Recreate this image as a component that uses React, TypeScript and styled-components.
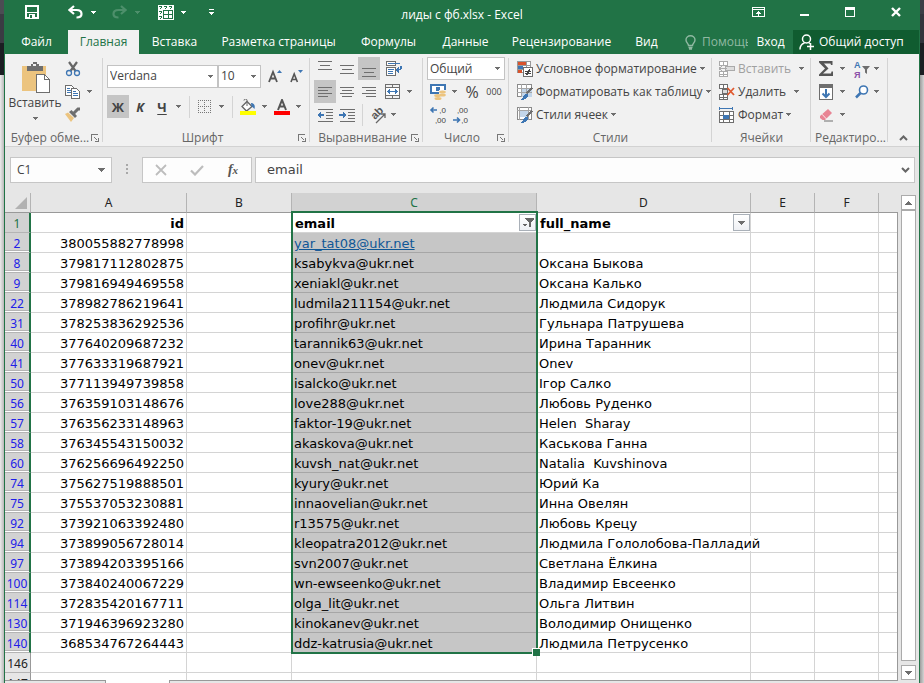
import React from "react";
import styled, { createGlobalStyle, css } from "styled-components";

const GREEN = "#217346";
const INK = "#444";
const BLUE = "#3e76b3";
const GREY = "#6e6e6e";

const GlobalStyle = createGlobalStyle`
  * { box-sizing: border-box; }
  body { margin: 0; overflow: hidden; }
  button, input, select { font: inherit; color: inherit; margin: 0; }
  svg { flex: none; }
`;

/* ---------- window ---------- */

const Desktop = styled.div`
  display: flex;
  height: 100vh;
  font: 12px/16px "Open Sans", "Noto Sans", sans-serif;
  color: ${INK};
  background: #e6e6e6;
`;

const Backdrop = styled.div<{ $side: "left" | "right" }>`
  flex: none;
  width: 4px;
  background: ${(p) =>
    p.$side === "left"
      ? "linear-gradient(#4b4c53 0 14px, #3a3b43 14px 43px, #1b1e22 43px 75px, transparent 75px), linear-gradient(90deg, #ececec, #b9b9b9)"
      : "linear-gradient(#3c3d45 0 14px, #33343c 14px 43px, #1b1e22 43px 75px, transparent 75px), linear-gradient(90deg, #9d9d9d, #d4d4d4)"};
`;

const Window = styled.div`
  flex: 1;
  min-width: 0;
  display: flex;
  flex-direction: column;
  border: solid ${GREEN};
  border-width: 0 1px;
  background: #e6e6e6;
`;

const IconButton = styled.button<{ $w?: number; $on?: boolean; $h?: number }>`
  display: inline-flex;
  align-items: center;
  justify-content: center;
  flex: none;
  width: ${(p) => p.$w ?? 22}px;
  height: ${(p) => p.$h ?? 23}px;
  padding: 0;
  border: 0;
  background: ${(p) => (p.$on ? "#c5c5c5" : "transparent")};
`;

const TitleBar = styled.header`
  display: grid;
  grid-template-columns: 1fr auto 1fr;
  align-items: center;
  height: 30px;
  background: ${GREEN};
  color: #fff;
`;

const QuickAccess = styled.div`
  display: flex;
  padding: 0 0 6px 14px;
`;

const Title = styled.h1`
  margin: 0;
  font: inherit;
`;

const WindowButtons = styled.div`
  display: flex;
  justify-content: flex-end;
  padding: 0 0 6px;
`;

const TabBar = styled.nav`
  display: flex;
  height: 24px;
  background: ${GREEN};
  color: #fff;
`;

const Tab = styled.button<{ $w: number; $active?: boolean }>`
  flex: none;
  width: ${(p) => p.$w}px;
  padding: 0;
  border: 0;
  white-space: nowrap;
  background: ${(p) => (p.$active ? "#f1f1f1" : "transparent")};
  color: ${(p) => (p.$active ? GREEN : "#fff")};
`;

const HelpBox = styled.button`
  flex: 1;
  min-width: 0;
  display: flex;
  align-items: center;
  gap: 6px;
  overflow: hidden;
  padding: 0 0 0 14px;
  border: 0;
  background: none;
  color: #90b9a2;
`;

const ShareButton = styled.button`
  flex: none;
  display: flex;
  align-items: center;
  gap: 4px;
  width: 126px;
  padding: 0 0 0 6px;
  border: 0;
  background: #105c30;
  color: #fff;
  white-space: nowrap;
`;

/* ---------- ribbon ---------- */

const Ribbon = styled.section`
  display: flex;
  height: 93px;
  background: #f1f1f1;
  border-bottom: 1px solid #d2d2d2;
`;

const GroupBox = styled.div<{ $w: number }>`
  flex: none;
  display: flex;
  flex-direction: column;
  width: ${(p) => p.$w}px;
  padding-top: 3px;
  position: relative;
  &::after {
    content: "";
    position: absolute;
    right: 0;
    top: 4px;
    bottom: 4px;
    width: 1px;
    background: #d4d4d4;
  }
`;

const GroupBody = styled.div<{ $pad?: number }>`
  flex: 1;
  padding-left: ${(p) => p.$pad ?? 4}px;
`;

const GroupLabel = styled.div`
  display: flex;
  align-items: center;
  height: 17px;
  padding: 0 4px;
  color: #666;
  white-space: nowrap;
  span { flex: 1; text-align: center; }
`;

const Row = styled.div<{ $h?: number }>`
  display: flex;
  align-items: center;
  height: ${(p) => p.$h ?? 23}px;
`;

const Spacer = styled.i<{ $w: number }>`
  flex: none;
  width: ${(p) => p.$w}px;
`;

const Divider = styled.i`
  flex: none;
  width: 1px;
  height: 22px;
  background: #d4d4d4;
`;

const ClipboardBody = styled.div`
  display: flex;
  flex: 1;
`;

const PasteButton = styled.button`
  display: flex;
  flex-direction: column;
  align-items: center;
  width: 60px;
  padding: 5px 0 0;
  border: 0;
  background: none;
  svg + span { margin: 2px 0 6px; }
`;

const SmallColumn = styled.div`
  display: flex;
  flex-direction: column;
`;

const TextButton = styled.button<{ $muted?: boolean }>`
  display: flex;
  align-items: center;
  gap: 3px;
  height: 23px;
  padding: 0;
  border: 0;
  background: none;
  white-space: nowrap;
  color: ${(p) => (p.$muted ? "#a0a0a0" : INK)};
`;

const Combo = styled.label<{ $w: number }>`
  display: grid;
  flex: none;
  align-items: center;
  width: ${(p) => p.$w}px;
  height: 23px;
  border: 1px solid #c3c3c3;
  background: #fff;
  & > * { grid-area: 1 / 1; }
  & > svg { justify-self: end; margin-right: 4px; pointer-events: none; }
  select {
    appearance: none;
    width: 100%;
    height: 100%;
    padding: 0 0 0 2px;
    border: 0;
    background: transparent;
  }
`;

const Letter = styled.span<{ $kind: "bold" | "italic" | "under" }>`
  font-weight: 700;
  font-size: 13px;
  ${(p) => p.$kind === "italic" && css`font-style: italic;`}
  ${(p) => p.$kind === "under" && css`text-decoration: underline; text-underline-offset: 2px;`}
`;

const Glyph = styled.span<{ $size: number }>`
  font-size: ${(p) => p.$size}px;
`;

const CollapseSlot = styled.div`
  flex: 1;
  display: flex;
  align-items: flex-end;
  justify-content: center;
`;

/* ---------- formula bar ---------- */

const FormulaBar = styled.div`
  display: flex;
  align-items: center;
  height: 46px;
  padding: 0 4px 0 5px;
`;

const NameBox = styled.label`
  display: flex;
  align-items: center;
  flex: none;
  width: 102px;
  height: 26px;
  padding: 0 6px;
  border: 1px solid #c6c6c6;
  background: #fdfdfd;
  input { flex: 1; min-width: 0; padding: 0; border: 0; background: none; }
`;

const Dots = styled.span`
  width: 30px;
  text-align: center;
`;

const FxBox = styled.div`
  display: flex;
  flex: none;
  align-items: center;
  width: 110px;
  height: 26px;
  margin-right: 3px;
  border: 1px solid #c6c6c6;
  background: #fdfdfd;
`;

const FormulaField = styled.label`
  display: flex;
  flex: 1;
  align-items: center;
  min-width: 0;
  height: 26px;
  padding: 0 4px 0 11px;
  border: 1px solid #c6c6c6;
  background: #fdfdfd;
  font-family: "DejaVu Sans", sans-serif;
  input { flex: 1; min-width: 0; padding: 0; border: 0; background: none; font-size: 13px; }
`;

/* ---------- sheet ---------- */

const SheetArea = styled.main`
  flex: 1;
  min-height: 0;
  display: flex;
`;

const SheetView = styled.div`
  flex: 1;
  min-width: 0;
  overflow: hidden;
  position: relative;
  &::after {
    content: "";
    position: absolute;
    inset: 19px 0 0 auto;
    width: 1px;
    background: #999;
  }
`;

const Table = styled.table`
  width: 100%;
  table-layout: fixed;
  border-collapse: separate;
  border-spacing: 0;
  font: 13px/17px "DejaVu Sans", sans-serif;
  color: #000;
`;

const Col = styled.col<{ $w?: number }>`
  width: ${(p) => (p.$w ? `${p.$w}px` : "auto")};
`;

const ColHead = styled.th<{ $on?: boolean }>`
  height: 20px;
  padding: 0;
  font: 12px/18px "Noto Sans", sans-serif;
  color: ${(p) => (p.$on ? GREEN : "#222")};
  background: ${(p) => (p.$on ? "#d2d2d2" : "#e6e6e6")};
  border-bottom: 1px solid #999;
  border-right: 1px solid #b4b4b4;
  &:last-child { border-right: 0; }
`;

const Corner = styled(ColHead)`
  svg { display: block; margin: 0 3px 0 auto; }
`;

const RowHead = styled.th<{ $state: "top" | "filtered" | "plain" }>`
  height: 20px;
  padding: 2px 0 0;
  font: 12px/17px "Noto Sans", sans-serif;
  border-bottom: 1px solid #b4b4b4;
  ${(p) =>
    p.$state === "plain"
      ? css`color: #222; background: #e6e6e6; border-right: 1px solid #999;`
      : css`
          color: ${p.$state === "top" ? GREEN : "#2020e8"};
          background: #d2d2d2;
          border-right: 2px solid ${GREEN};
        `}
  ${(p) => p.$state === "filtered" && css`box-shadow: inset 0 -1px #fff, inset 0 -2px #b4b4b4;`}
`;

const Cell = styled.td<{ $right?: boolean; $bold?: boolean; $selected?: boolean }>`
  height: 20px;
  padding: 2px 2px 0;
  white-space: pre;
  text-align: ${(p) => (p.$right ? "right" : "left")};
  font-weight: ${(p) => (p.$bold ? 700 : 400)};
  border-right: 1px solid #d4d4d4;
  border-bottom: 1px solid ${(p) => (p.$selected ? "#a6a6a6" : "#d4d4d4")};
  background: ${(p) => (p.$selected ? "#c6c6c6" : "#fff")};
  &:last-child { border-right: 0; }
`;

const NameCell = styled(Cell)`
  overflow: visible;
  span { position: relative; background: #fff; }
`;

const FilterCell = styled(Cell)`
  padding: 0 0 0 3px;
`;

const HeadCell = styled.div`
  display: flex;
  align-items: center;
  justify-content: space-between;
  height: 19px;
  span { padding-top: 2px; }
`;

const FilterButton = styled.button`
  display: flex;
  align-items: center;
  justify-content: center;
  width: 17px;
  height: 17px;
  padding: 0;
  border: 1px solid #a9b0b8;
  background: linear-gradient(#fff, #eef0f4);
`;

const MailLink = styled.a`
  color: #0f5796;
  text-decoration: underline;
`;

const Selection = styled.div`
  position: absolute;
  left: 286px;
  top: 18px;
  width: 247px;
  height: 443px;
  border: 2px solid ${GREEN};
  pointer-events: none;
  &::after {
    content: "";
    position: absolute;
    right: -4px;
    bottom: -4px;
    width: 7px;
    height: 7px;
    border: solid #fff;
    border-width: 1px 0 0 1px;
    background: ${GREEN};
  }
`;

const ScrollBar = styled.div`
  flex: none;
  display: flex;
  flex-direction: column;
  width: 21px;
  padding: 2px 3px 0;
`;

const ScrollButton = styled.button`
  display: flex;
  align-items: center;
  justify-content: center;
  height: 15px;
  padding: 0;
  border: 1px solid #ababab;
  background: #fff;
`;

const Thumb = styled.div`
  flex: 1;
  margin-bottom: 4px;
  border: 1px solid #ababab;
  background: #fff;
`;

const SheetTabs = styled.footer`
  display: flex;
  flex: none;
  height: 3px;
  padding-right: 21px;
`;

const SheetTab = styled.div<{ $w?: number; $active?: boolean }>`
  ${(p) => (p.$w ? css`flex: none; width: ${p.$w}px;` : css`flex: 1;`)}
  ${(p) =>
    p.$active
      ? css`background: #fff; border: solid #999; border-width: 0 1px;`
      : css`border-top: 1px solid #999;`}
`;

/* ---------- drawings ---------- */

type SvgProps = { w: number; h: number; children: React.ReactNode; smooth?: boolean };
const Svg = ({ w, h, children, smooth }: SvgProps) => (
  <svg
    width={w}
    height={h}
    viewBox={`0 0 ${w} ${h}`}
    fill="none"
    shapeRendering={smooth ? "auto" : "crispEdges"}
    aria-hidden="true"
  >
    {children}
  </svg>
);

const Caret = ({ color = GREY }: { color?: string }) => (
  <Svg w={5} h={3}><path d="M0 0h5v1h-1v1h-1v1h-1v-1h-1v-1h-1z" fill={color} /></Svg>
);

const UpCaret = () => (
  <Svg w={7} h={4}><path d="M3 0h1v1h1v1h1v1h1v1H0v-1h1v-1h1v-1h1z" fill={GREY} /></Svg>
);

const BigCaret = () => (
  <Svg w={7} h={4}><path d="M0 0h7v1h-1v1h-1v1h-1v1h-1v-1h-1v-1h-1v-1h-1z" fill={GREY} /></Svg>
);

const Launcher = () => (
  <Svg w={8} h={8}><path d="M.5 7V.5H7M3.5 3.5l3 3M7.5 4v3.5H4" stroke="#777" /></Svg>
);

const SaveIcon = () => (
  <Svg w={14} h={14}>
    <path d="M1 1h12v12H1z" stroke="#fff" strokeWidth="2" />
    <path d="M2 7h10v1H2zM4 9h6v4H4z" fill="#fff" />
    <path d="M5 10h2v3H5z" fill={GREEN} />
  </Svg>
);

const UndoIcon = ({ color }: { color: string }) => (
  <Svg w={15} h={14} smooth>
    <path d="M6 1L1.5 5 6 9M2 5h6.5c3 0 5 1.500 5 4s-2 3.500-5 3.500" stroke={color} strokeWidth="2.200" />
  </Svg>
);

const RedoIcon = ({ color }: { color: string }) => (
  <Svg w={15} h={14} smooth>
    <path d="M9 1l4.500 4L9 9M13 5H6.500c-3 0-5 1.500-5 4s2 3.500 5 3.500" stroke={color} strokeWidth="2.200" />
  </Svg>
);

const GridToolIcon = () => (
  <Svg w={16} h={15}>
    <path d="M0 0h16v15H0z" fill="#fff" />
    <path d="M1 1.500h3M3.500 2v1M2 3.500h1M6 1.500h3M8.500 2v1M7 3.500h1M11 1.500h3M13.500 2v1M12 3.500h1" stroke={GREEN} />
    <path d="M1 6.500h3M3.500 7v1M2 8.500h1M1 11.500h3M3.500 12v1M2 13.500h1" stroke={GREEN} />
    <path d="M5 5.500h10M5.500 5v9M5 9.500h10M10.500 5v9M5 13.500h10M14.500 5v9" stroke={GREEN} />
  </Svg>
);

const CustomizeIcon = () => (
  <Svg w={5} h={6}><path d="M0 0h5v1H0zM0 3h5L2.500 6z" fill="#fff" /></Svg>
);

const RibbonOptionsIcon = () => (
  <Svg w={13} h={10}>
    <path d="M.5.5h12v9H.5zM1 2.500h11" stroke="#fff" />
    <path d="M6 4h1v5H6zM5 5h3v1H5zM4 6h5v1H4z" fill="#fff" />
  </Svg>
);

const MinimizeIcon = () => <Svg w={9} h={10}><path d="M0 7h9v2H0z" fill="#fff" /></Svg>;
const MaximizeIcon = () => (
  <Svg w={10} h={10}><path d="M.5.5h9v9h-9z" stroke="#fff" /><path d="M0 0h10v3H0z" fill="#fff" /></Svg>
);
const CloseIcon = () => (
  <Svg w={10} h={10} smooth><path d="M1 1l8 8M9 1L1 9" stroke="#fff" strokeWidth="2.400" /></Svg>
);

const BulbIcon = () => (
  <Svg w={11} h={15} smooth>
    <path d="M3.500 10.500C3.500 8.500 1 7.500 1 4.900a4.500 4.200 0 019 0c0 2.600-2.500 3.600-2.500 5.600zM3.500 12.500h4M4 14h3" stroke="#90b9a2" strokeWidth="1.400" />
  </Svg>
);

const ShareIcon = () => (
  <Svg w={16} h={16} smooth>
    <circle cx="7.500" cy="5" r="4" stroke="#fff" strokeWidth="1.500" />
    <path d="M1 15.500c0-3 1.500-5.500 4.500-6.500M9.500 8.500l1.500 1M8 12.500h7M11.500 9v7" stroke="#fff" strokeWidth="1.500" />
  </Svg>
);

const PasteIcon = () => (
  <Svg w={29} h={31}>
    <path d="M1 4h24v25H1z" fill="#ecc47f" />
    <path d="M6 4h4V2h2V0h4v2h2v2h4v5H6z" fill={GREY} />
    <path d="M12 2h3v2h-3z" fill="#f1f1f1" />
    <path d="M15.500 12.500h8l5 5v13h-13z" fill="#fff" stroke={GREY} />
    <path d="M23.500 12v5.500H29" stroke={GREY} />
  </Svg>
);

const CutIcon = () => (
  <Svg w={16} h={16} smooth>
    <path d="M4 1l6.500 9M12 1L5.500 10" stroke="#666" strokeWidth="2.200" />
    <circle cx="4" cy="12" r="2.500" stroke={BLUE} strokeWidth="1.300" />
    <circle cx="12" cy="12" r="2.500" stroke={BLUE} strokeWidth="1.300" />
  </Svg>
);

const CopyIcon = () => (
  <Svg w={16} h={14}>
    <path d="M.5.5h6l3 3v7h-9z" fill="#fff" stroke={GREY} />
    <path d="M2 3.500h3M2 5.500h4M2 7.500h4" stroke={BLUE} />
    <path d="M6.500 3.500h5l3 3v7h-8z" fill="#fff" stroke={GREY} />
    <path d="M8 6.500h3M8 8.500h5M8 10.500h5" stroke={BLUE} />
  </Svg>
);

const BrushIcon = () => (
  <Svg w={16} h={15} smooth>
    <path d="M0 7l3-1.500 6 5.500-3 4z" fill="#ecc47f" />
    <path d="M4 5l2.500-2 5.500 6-2 2z" fill={GREY} />
    <path d="M8.500 6.500L13 2h2" stroke={GREY} strokeWidth="3" />
  </Svg>
);

const GrowIcon = ({ up }: { up?: boolean }) => (
  <Svg w={14} h={14} smooth>
    {up ? (
      <>
        <path d="M1 13L5 3l4 10M2.500 9.500h5" stroke="#555" strokeWidth="1.800" />
        <path d="M9 4h5l-2.500-3z" fill={BLUE} />
      </>
    ) : (
      <>
        <path d="M1 13l3.200-8 3.200 8M2.500 10.500h4" stroke="#555" strokeWidth="1.600" />
        <path d="M8 1h5l-2.500 3z" fill={BLUE} />
      </>
    )}
  </Svg>
);

const BordersIcon = () => (
  <Svg w={14} h={14}>
    <path d="M.5 0v13M6.500 0v13M12.500 0v13M0 .5h13M0 6.500h13M0 12.500h13" stroke="#777" strokeDasharray="1 1" />
  </Svg>
);

const FillIcon = () => (
  <Svg w={16} h={16} smooth>
    <path d="M7 2.500l5 5-5.500 4.500L2 7.500z" fill="#fff" stroke="#666" strokeWidth="1.300" />
    <path d="M7 7V1.500a1.500 1.500 0 00-3 0" stroke="#666" />
    <path d="M11 4c3 0 4.500 2.500 3.500 6-1-1-2-2-3-2.500z" fill={BLUE} />
    <path d="M0 12h16v4H0z" fill="#ff0" />
  </Svg>
);

const FontColorIcon = () => (
  <Svg w={16} h={16} smooth>
    <path d="M4 11L8 1l4 10M5.500 7.500h5" stroke="#555" strokeWidth="2" />
    <path d="M0 12h16v4H0z" fill="#f00" />
  </Svg>
);

const LinesIcon = ({ lines, align = "left" }: { lines: number[]; align?: "left" | "center" | "right" }) => (
  <Svg w={14} h={16}>
    {lines.map((y, i) => {
      const w = i % 2 ? 10 : 14;
      const x = align === "left" ? 0 : align === "center" ? (14 - w) / 2 : 14 - w;
      return <rect key={y} x={x} y={y} width={w} height={1} fill={GREY} />;
    })}
  </Svg>
);

const WrapIcon = () => (
  <Svg w={16} h={16}>
    <path d="M.5.5h9v4h-9zM.5 6.500h9v8h-9z" fill="#fff" stroke={GREY} />
    <path d="M2 2.500h12M2 8.500h6M2 10.500h5M2 12.500h5" stroke={BLUE} />
    <path d="M15 5v2q0 2-4 2M13 6.500L10.500 9l2.500 2.500" stroke={BLUE} strokeWidth="1.500" />
  </Svg>
);

const MergeIcon = () => (
  <Svg w={16} h={15}>
    <path d="M.5.5h14v14H.5zM0 3.500h15M0 11.500h15M7.500 0v3M7.500 12v3" stroke={GREY} />
    <path d="M1 4h13v7H1z" fill="#fff" />
    <path d="M3 7h9v1H3z" fill={BLUE} />
    <path d="M5 5v5L2 7.500zM10 5v5l3-2.500z" fill={BLUE} />
  </Svg>
);

const IndentIcon = ({ inward }: { inward?: boolean }) => (
  <Svg w={16} h={14}>
    <path d="M1 1.500h15M9 4.500h7M9 7.500h7M9 10.500h7M1 13.500h15" stroke={GREY} />
    <path d={inward ? "M0 6h4V4l4 3-4 3V8H0z" : "M7 6H4V4L0 7l4 3V8h3z"} fill={BLUE} />
  </Svg>
);

const OrientIcon = () => (
  <Svg w={20} h={20} smooth>
    <text transform="translate(7 15) rotate(-45)" fontSize="11" fontWeight="700" fontFamily="Liberation Sans, sans-serif" fill="#555">ab</text>
    <path d="M8 18l9-9M13 9h4v4" stroke="#666" strokeWidth="1.300" />
  </Svg>
);

const CurrencyIcon = () => (
  <Svg w={16} h={16} smooth>
    <path d="M1 1h14v8H1z" fill="#fff" stroke={BLUE} strokeWidth="2" />
    <path d="M6 3h4v4H6z" fill={BLUE} />
    <path d="M9 6h7v8H9z" fill="#f1f1f1" />
    <ellipse cx="12.500" cy="8" rx="3.300" ry="1.500" fill="#ecc47f" />
    <ellipse cx="12.500" cy="11" rx="3.300" ry="1.500" fill="#ecc47f" />
    <ellipse cx="7.500" cy="11.500" rx="3.300" ry="1.500" fill="#ecc47f" />
    <ellipse cx="8" cy="14.500" rx="3.500" ry="1.500" fill="#ecc47f" />
  </Svg>
);

const DecimalIcon = ({ more }: { more?: boolean }) => (
  <Svg w={18} h={20} smooth>
    <g fontSize="8" fontFamily="Liberation Sans, sans-serif" fill={INK} textAnchor="end">
      <text x="17" y="8">{more ? ",00" : ",0"}</text>
      <text x="17" y="18">{more ? ",0" : ",00"}</text>
    </g>
    <path d={more ? "M2 15h6M6 12.500L8.500 15 6 17.500" : "M2 5h6M4.500 2.500L2 5l2.500 2.500"} stroke={BLUE} strokeWidth="1.600" />
  </Svg>
);

const ConditionalIcon = () => (
  <Svg w={16} h={16}>
    <path d="M.5.5h13v11H.5zM0 4.500h14M0 8.500h14M9.500 0v12" fill="#fff" stroke="#999" />
    <path d="M1 1h8v3H1zM1 9h4v3H1z" fill="#d9532c" />
    <path d="M1 5h5v3H1z" fill={BLUE} />
    <path d="M6.500 6.500h9v9h-9z" fill="#fff" stroke={GREY} />
    <path d="M8 10.500h6M8 12.500h6M12.500 8.500l-3 6" stroke="#444" />
  </Svg>
);

const StyleBrush = () => (
  <>
    <path d="M16 4l-5 6-2-1 5-6z" fill={GREY} />
    <path d="M11 10c1 3-2 6-7 6 2-1 2-5 5-6z" fill={BLUE} />
  </>
);

const TableStyleIcon = ({ single }: { single?: boolean }) => (
  <Svg w={16} h={16}>
    <path d="M.5.500h14v12H.5z" fill="#fff" stroke="#8a8a8a" />
    <path d={single ? "M3 4h8v6H3z" : "M4 4h11v9H4z"} fill="#c3d6ea" />
    <path d={single ? "M2.500 0v13M0 3.500h15M11.500 0v13" : "M4.500 0v13M9.500 0v13M0 4.500h15M0 8.500h15"} stroke="#a5a5a5" />
    <StyleBrush />
  </Svg>
);

const CellsIcon = ({ kind }: { kind: "insert" | "delete" | "format" }) => {
  const line = kind === "insert" ? "#aaa" : GREY;
  return (
    <Svg w={16} h={16}>
      {kind === "format" ? (
        <>
          <path d="M.5 4.500h14v11H.5zM0 8.500h15M0 12.500h15M4.500 4v12M10.500 4v12" fill="#fff" stroke={GREY} />
          <path d="M4 8h6v4H4z" fill={BLUE} />
          <path d="M.5 0v3M13.500 0v3M1 1.500h12" stroke={BLUE} />
        </>
      ) : (
        <>
          <path d="M.5.500h8v4h-8zM4.500 0v4M.5 10.500h8v5h-8zM4.500 11v4M.5 13.500h8" fill="#fff" stroke={line} />
          {kind === "insert" ? (
            <>
              <path d="M6.500 5.500h9v4h-9z" fill="#ddd" stroke={line} />
              <path d="M0 7.500h8M3 5L0 7.500 3 10" stroke={line} />
            </>
          ) : (
            <>
              <path d="M3.500 5.500h5v4h-5z" fill="#ddd" stroke={line} />
              <path d="M8.500 4l6.500 7M15 4l-6.500 7" stroke="#e0592f" strokeWidth="1.800" shapeRendering="auto" />
            </>
          )}
        </>
      )}
    </Svg>
  );
};

const SigmaIcon = () => (
  <Svg w={16} h={15} smooth>
    <path d="M1 0h13.500v4H13l-.5-1.500H6L10.500 7.500 5 12.500h8l.5-2H15V15H1v-1.500L7 7.500 1 1.500z" fill="#555" />
  </Svg>
);

const SortIcon = () => (
  <Svg w={17} h={20} smooth>
    <g fontSize="9" fontWeight="700" fontFamily="Liberation Sans, sans-serif">
      <text x="0" y="9" fill={BLUE}>А</text>
      <text x="0" y="19" fill="#8b4fa8">Я</text>
    </g>
    <path d="M8 7h8l-3 3.500V15l-2-1.500v-3z" fill={GREY} />
  </Svg>
);

const FillDownIcon = () => (
  <Svg w={14} h={16}>
    <path d="M.5.5h13v15H.5z" fill="#fff" stroke={GREY} />
    <path d="M0 0h14v4H0z" fill={GREY} />
    <path d="M7 5v8M3.500 9.500L7 13l3.500-3.500" stroke={BLUE} strokeWidth="2" shapeRendering="auto" />
  </Svg>
);

const FindIcon = () => (
  <Svg w={14} h={14} smooth>
    <circle cx="8.500" cy="5" r="4" fill="#fff" stroke={BLUE} strokeWidth="1.600" />
    <path d="M5.500 8L1 12.500" stroke={BLUE} strokeWidth="2.500" />
  </Svg>
);

const EraserIcon = () => (
  <Svg w={14} h={14} smooth>
    <path d="M1 8l8-7 4 4-7 7H3.500L1 10z" fill="#e88494" />
    <path d="M3 6.200l4.500 4.800" stroke="#fff" strokeWidth=".8" />
    <path d="M5 13h9" stroke={GREY} />
  </Svg>
);

const ChevronIcon = ({ down }: { down?: boolean }) => (
  <Svg w={9} h={6} smooth>
    <path d={down ? "M1 1l3.500 3.500L8 1" : "M1 5l3.500-3.500L8 5"} stroke="#666" strokeWidth="2" />
  </Svg>
);

const CancelIcon = () => (
  <Svg w={12} h={12} smooth><path d="M1 1l10 10M11 1L1 11" stroke="#bdbdbd" strokeWidth="1.800" /></Svg>
);

const AcceptIcon = () => (
  <Svg w={14} h={12} smooth><path d="M1 6.500L5 10.500 13 2" stroke="#bdbdbd" strokeWidth="2.200" /></Svg>
);

const FxLabel = styled.span`
  font: italic 700 14px/16px "Liberation Serif", serif;
  color: #555;
  small { font-size: 11px; }
`;

const DotsIcon = () => (
  <Svg w={2} h={10}><path d="M0 0h2v2H0zM0 4h2v2H0zM0 8h2v2H0z" fill="#a8a8a8" /></Svg>
);

const CornerIcon = () => <Svg w={12} h={12} smooth><path d="M12 0v12H0z" fill="#b2b2b2" /></Svg>;

const FunnelIcon = () => (
  <Svg w={12} h={9}>
    <path d="M3 0h9v1l-3 3v5H7V4L3 1zM0 6h5L2.500 8.500z" fill="#666" />
  </Svg>
);

/* ---------- data ---------- */

const tabs: [string, number][] = [
  ["Файл", 63], ["Главная", 71], ["Вставка", 71], ["Разметка страницы", 137],
  ["Формулы", 83], ["Данные", 71], ["Рецензирование", 121], ["Вид", 49],
];

const rows: [number, string, string, string][] = [
  [2, "380055882778998", "yar_tat08@ukr.net", ""],
  [8, "379817112802875", "ksabykva@ukr.net", "Оксана Быкова"],
  [9, "379816949469558", "xeniakl@ukr.net", "Оксана Калько"],
  [22, "378982786219641", "ludmila211154@ukr.net", "Людмила Сидорук"],
  [31, "378253836292536", "profihr@ukr.net", "Гульнара Патрушева"],
  [40, "377640209687232", "tarannik63@ukr.net", "Ирина Таранник"],
  [41, "377633319687921", "onev@ukr.net", "Onev"],
  [50, "377113949739858", "isalcko@ukr.net", "Ігор Салко"],
  [56, "376359103148676", "love288@ukr.net", "Любовь Руденко"],
  [57, "376356233148963", "faktor-19@ukr.net", "Helen  Sharay"],
  [58, "376345543150032", "akaskova@ukr.net", "Каськова Ганна"],
  [60, "376256696492250", "kuvsh_nat@ukr.net", "Natalia  Kuvshinova"],
  [74, "375627519888501", "kyury@ukr.net", "Юрий Ка"],
  [75, "375537053230881", "innaovelian@ukr.net", "Инна Овелян"],
  [92, "373921063392480", "r13575@ukr.net", "Любовь Крецу"],
  [94, "373899056728014", "kleopatra2012@ukr.net", "Людмила Гололобова-Палладий"],
  [97, "373894203395166", "svn2007@ukr.net", "Светлана Ёлкина"],
  [100, "373840240067229", "wn-ewseenko@ukr.net", "Владимир Евсеенко"],
  [114, "372835420167711", "olga_lit@ukr.net", "Ольга Литвин"],
  [130, "371946396923280", "kinokanev@ukr.net", "Володимир Онищенко"],
  [140, "368534767264443", "ddz-katrusia@ukr.net", "Людмила Петрусенко"],
];

const Group = ({ w, label, launcher, children }: { w: number; label: string; launcher?: boolean; children: React.ReactNode }) => (
  <GroupBox $w={w}>
    {children}
    <GroupLabel>
      <span>{label}</span>
      {launcher && <IconButton $w={8} $h={8} aria-label={`${label}: параметры`}><Launcher /></IconButton>}
    </GroupLabel>
  </GroupBox>
);

const DropButton = ({ label, w = 10 }: { label: string; w?: number }) => (
  <IconButton $w={w} aria-label={label}><Caret /></IconButton>
);

const RibbonPanel = () => (
  <Ribbon>
    <Group w={98} label="Буфер обме..." launcher>
      <ClipboardBody>
        <PasteButton><PasteIcon /><span>Вставить</span><Caret /></PasteButton>
        <SmallColumn>
          <Row><IconButton $w={16} aria-label="Вырезать"><CutIcon /></IconButton></Row>
          <Row>
            <IconButton $w={16} aria-label="Копировать"><CopyIcon /></IconButton>
            <DropButton w={16} label="Варианты копирования" />
          </Row>
          <Row><IconButton $w={16} aria-label="Формат по образцу"><BrushIcon /></IconButton></Row>
        </SmallColumn>
      </ClipboardBody>
    </Group>

    <Group w={207} label="Шрифт" launcher>
      <GroupBody>
        <Row $h={38}>
          <Combo $w={111}>
            <select aria-label="Шрифт"><option>Verdana</option></select><Caret />
          </Combo>
          <Combo $w={43}>
            <select aria-label="Размер шрифта"><option>10</option></select><Caret />
          </Combo>
          <Spacer $w={3} />
          <IconButton aria-label="Увеличить размер"><GrowIcon up /></IconButton>
          <IconButton aria-label="Уменьшить размер"><GrowIcon /></IconButton>
        </Row>
        <Row>
          <IconButton $on aria-label="Полужирный"><Letter $kind="bold">Ж</Letter></IconButton>
          <IconButton aria-label="Курсив"><Letter $kind="italic">К</Letter></IconButton>
          <IconButton aria-label="Подчёркнутый"><Letter $kind="under">Ч</Letter></IconButton>
          <DropButton label="Вид подчёркивания" />
          <Spacer $w={6} /><Divider /><Spacer $w={4} />
          <IconButton aria-label="Границы"><BordersIcon /></IconButton>
          <DropButton label="Виды границ" />
          <Spacer $w={6} /><Divider /><Spacer $w={4} />
          <IconButton aria-label="Цвет заливки"><FillIcon /></IconButton>
          <DropButton label="Цвета заливки" />
          <Spacer $w={2} />
          <IconButton aria-label="Цвет текста"><FontColorIcon /></IconButton>
          <DropButton label="Цвета текста" />
        </Row>
      </GroupBody>
    </Group>

    <Group w={113} label="Выравнивание" launcher>
      <GroupBody>
        <Row>
          <IconButton aria-label="По верхнему краю"><LinesIcon lines={[0, 4, 8]} align="center" /></IconButton>
          <IconButton aria-label="Посередине"><LinesIcon lines={[4, 8, 12]} align="center" /></IconButton>
          <IconButton $on aria-label="По нижнему краю"><LinesIcon lines={[7, 11, 15]} align="center" /></IconButton>
          <Spacer $w={3} />
          <IconButton aria-label="Перенести текст"><WrapIcon /></IconButton>
        </Row>
        <Row>
          <IconButton $on aria-label="По левому краю"><LinesIcon lines={[3, 6, 9, 12]} /></IconButton>
          <IconButton aria-label="По центру"><LinesIcon lines={[3, 6, 9, 12]} align="center" /></IconButton>
          <IconButton aria-label="По правому краю"><LinesIcon lines={[3, 6, 9, 12]} align="right" /></IconButton>
          <Spacer $w={2} />
          <IconButton aria-label="Объединить"><MergeIcon /></IconButton>
          <DropButton label="Варианты объединения" />
        </Row>
        <Row>
          <IconButton aria-label="Уменьшить отступ"><IndentIcon /></IconButton>
          <IconButton aria-label="Увеличить отступ"><IndentIcon inward /></IconButton>
          <Spacer $w={4} /><Divider /><Spacer $w={4} />
          <IconButton aria-label="Ориентация"><OrientIcon /></IconButton>
          <DropButton w={8} label="Варианты ориентации" />
        </Row>
      </GroupBody>
    </Group>

    <Group w={86} label="Число" launcher>
      <GroupBody>
        <Row>
          <Combo $w={78}>
            <select aria-label="Числовой формат"><option>Общий</option></select><Caret />
          </Combo>
        </Row>
        <Row>
          <IconButton aria-label="Финансовый формат"><CurrencyIcon /></IconButton>
          <DropButton label="Валюты" />
          <Spacer $w={2} />
          <IconButton aria-label="Процентный формат"><Glyph $size={16}>%</Glyph></IconButton>
          <IconButton aria-label="Формат с разделителями"><Glyph $size={9}>000</Glyph></IconButton>
        </Row>
        <Row>
          <IconButton aria-label="Увеличить разрядность"><DecimalIcon /></IconButton>
          <IconButton aria-label="Уменьшить разрядность"><DecimalIcon more /></IconButton>
        </Row>
      </GroupBody>
    </Group>

    <Group w={203} label="Стили">
      <GroupBody $pad={8}>
        <TextButton><ConditionalIcon />Условное форматирование<Caret /></TextButton>
        <TextButton><TableStyleIcon />Форматировать как таблицу<Caret /></TextButton>
        <TextButton><TableStyleIcon single />Стили ячеек<Caret /></TextButton>
      </GroupBody>
    </Group>

    <Group w={99} label="Ячейки">
      <GroupBody $pad={7}>
        <TextButton $muted><CellsIcon kind="insert" />Вставить<Spacer $w={2} /><Caret /></TextButton>
        <TextButton><CellsIcon kind="delete" />Удалить<Spacer $w={2} /><Caret /></TextButton>
        <TextButton><CellsIcon kind="format" />Формат<Caret /></TextButton>
      </GroupBody>
    </Group>

    <Group w={77} label="Редактиро...">
      <GroupBody>
        <Row>
          <IconButton aria-label="Сумма"><SigmaIcon /></IconButton>
          <DropButton label="Функции" /><Spacer $w={4} />
          <IconButton aria-label="Сортировка и фильтр"><SortIcon /></IconButton>
          <DropButton w={6} label="Варианты сортировки" />
        </Row>
        <Row>
          <IconButton aria-label="Заполнить"><FillDownIcon /></IconButton>
          <DropButton label="Варианты заполнения" /><Spacer $w={4} />
          <IconButton aria-label="Найти и выделить"><FindIcon /></IconButton>
          <DropButton w={6} label="Варианты поиска" />
        </Row>
        <Row>
          <IconButton aria-label="Очистить"><EraserIcon /></IconButton>
          <DropButton label="Варианты очистки" />
        </Row>
      </GroupBody>
    </Group>

    <CollapseSlot>
      <IconButton $h={16} aria-label="Свернуть ленту"><ChevronIcon /></IconButton>
    </CollapseSlot>
  </Ribbon>
);

const Sheet = () => (
  <SheetView>
    <Table>
      <colgroup>
        {[26, 156, 105, 245, 214, 64, 64].map((w, i) => <Col key={i} $w={w} />)}
        <Col />
      </colgroup>
      <thead>
        <tr>
          <Corner aria-label="Выделить всё"><CornerIcon /></Corner>
          {["A", "B", "C", "D", "E", "F"].map((c) => <ColHead key={c} scope="col" $on={c === "C"}>{c}</ColHead>)}
          <ColHead />
        </tr>
      </thead>
      <tbody>
        <tr>
          <RowHead scope="row" $state="top">1</RowHead>
          <Cell $right $bold>id</Cell>
          <Cell />
          <FilterCell $bold>
            <HeadCell><span>email</span><FilterButton aria-label="Фильтр email"><FunnelIcon /></FilterButton></HeadCell>
          </FilterCell>
          <FilterCell $bold>
            <HeadCell><span>full_name</span><FilterButton aria-label="Фильтр full_name"><BigCaret /></FilterButton></HeadCell>
          </FilterCell>
          <Cell /><Cell /><Cell />
        </tr>
        {rows.map(([n, id, email, name]) => (
          <tr key={n}>
            <RowHead scope="row" $state="filtered">{n}</RowHead>
            <Cell $right>{id}</Cell>
            <Cell />
            <Cell $selected>{n === 2 ? <MailLink href={`mailto:${email}`}>{email}</MailLink> : email}</Cell>
            <NameCell><span>{name}</span></NameCell>
            <Cell /><Cell /><Cell />
          </tr>
        ))}
        {[146, 147].map((n) => (
          <tr key={n}>
            <RowHead scope="row" $state="plain">{n}</RowHead>
            <Cell /><Cell /><Cell /><Cell /><Cell /><Cell /><Cell />
          </tr>
        ))}
      </tbody>
    </Table>
    <Selection />
  </SheetView>
);

export default function App() {
  return (
    <>
      <GlobalStyle />
      <Desktop>
        <Backdrop $side="left" />
        <Window>
          <TitleBar>
            <QuickAccess>
              <IconButton $w={26} aria-label="Сохранить"><SaveIcon /></IconButton>
              <Spacer $w={17} />
              <IconButton $w={26} aria-label="Отменить"><UndoIcon color="#fff" /></IconButton>
              <IconButton $w={10} aria-label="Список отмены"><Caret color="#fff" /></IconButton>
              <Spacer $w={8} />
              <IconButton $w={26} aria-label="Вернуть"><RedoIcon color="#4d8f6b" /></IconButton>
              <IconButton $w={10} aria-label="Список возврата"><Caret color="#4d8f6b" /></IconButton>
              <Spacer $w={12} />
              <IconButton $w={24} aria-label="Таблица"><GridToolIcon /></IconButton>
              <IconButton $w={10} aria-label="Варианты таблицы"><Caret color="#fff" /></IconButton>
              <Spacer $w={12} />
              <IconButton aria-label="Настройка панели"><CustomizeIcon /></IconButton>
            </QuickAccess>
            <Title>лиды с фб.xlsx - Excel</Title>
            <WindowButtons>
              <IconButton $w={46} aria-label="Параметры ленты"><RibbonOptionsIcon /></IconButton>
              <IconButton $w={46} aria-label="Свернуть"><MinimizeIcon /></IconButton>
              <IconButton $w={46} aria-label="Развернуть"><MaximizeIcon /></IconButton>
              <IconButton $w={46} aria-label="Закрыть"><CloseIcon /></IconButton>
            </WindowButtons>
          </TitleBar>
          <TabBar>
            {tabs.map(([name, w]) => <Tab key={name} $w={w} $active={name === "Главная"}>{name}</Tab>)}
            <HelpBox><BulbIcon />Помощь</HelpBox>
            <Tab $w={45}>Вход</Tab>
            <ShareButton><ShareIcon />Общий доступ</ShareButton>
          </TabBar>
          <RibbonPanel />
          <FormulaBar>
            <NameBox><input aria-label="Имя ячейки" defaultValue="C1" /><BigCaret /></NameBox>
            <Dots><DotsIcon /></Dots>
            <FxBox>
              <IconButton $w={36} aria-label="Отмена"><CancelIcon /></IconButton>
              <IconButton $w={36} aria-label="Ввод"><AcceptIcon /></IconButton>
              <IconButton $w={36} aria-label="Вставить функцию"><FxLabel>f<small>x</small></FxLabel></IconButton>
            </FxBox>
            <FormulaField><input aria-label="Строка формул" defaultValue="email" /><ChevronIcon down /></FormulaField>
          </FormulaBar>
          <SheetArea>
            <Sheet />
            <ScrollBar>
              <ScrollButton aria-label="Прокрутить вверх"><UpCaret /></ScrollButton>
              <Thumb />
              <ScrollButton aria-label="Прокрутить вниз"><BigCaret /></ScrollButton>
            </ScrollBar>
          </SheetArea>
          <SheetTabs>
            <SheetTab $w={100} />
            <SheetTab $w={65} $active />
            <SheetTab />
          </SheetTabs>
        </Window>
        <Backdrop $side="right" />
      </Desktop>
    </>
  );
}
